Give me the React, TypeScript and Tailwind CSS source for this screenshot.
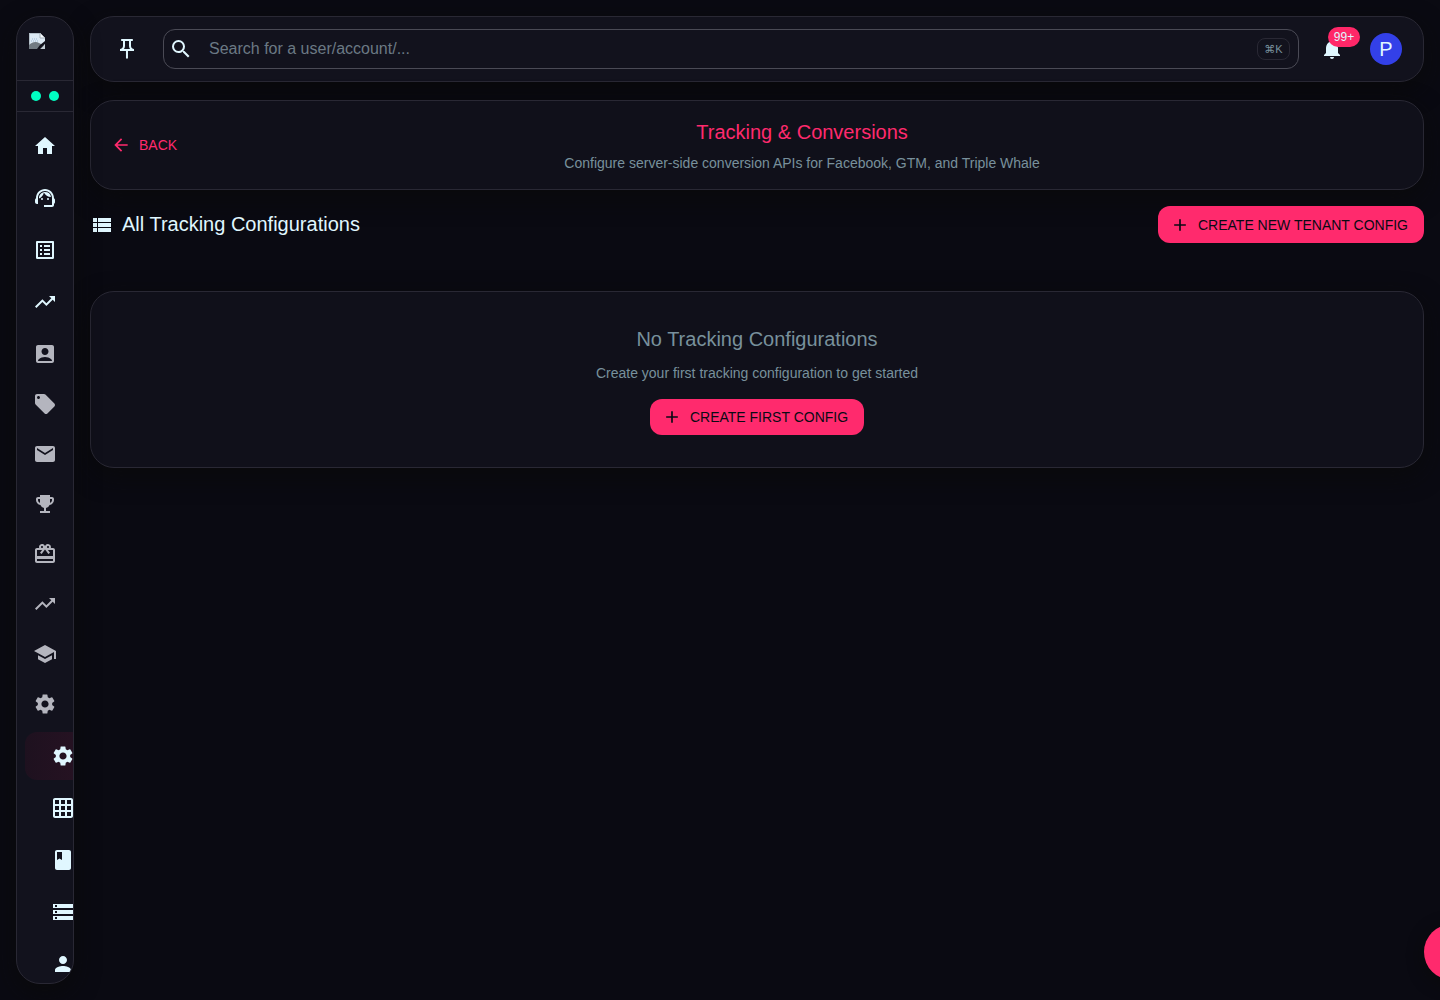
import React from "react";
import type { IconType } from "react-icons";
import {
  MdAccountBox,
  MdAdd,
  MdArrowBack,
  MdBook,
  MdCardGiftcard,
  MdEmail,
  MdEmojiEvents,
  MdGridOn,
  MdHome,
  MdListAlt,
  MdLocalOffer,
  MdNotifications,
  MdOutlinePushPin,
  MdPerson,
  MdSchool,
  MdSearch,
  MdSettings,
  MdStorage,
  MdSupportAgent,
  MdTrendingUp,
  MdViewList,
} from "react-icons/md";

interface NavEntry {
  label: string;
  icon: IconType;
  active?: boolean;
}

const MAIN_NAV: NavEntry[] = [
  { label: "Home", icon: MdHome },
  { label: "Support", icon: MdSupportAgent },
  { label: "Orders", icon: MdListAlt },
  { label: "Analytics", icon: MdTrendingUp },
];

const GROUP_NAV: NavEntry[] = [
  { label: "Accounts", icon: MdAccountBox },
  { label: "Offers", icon: MdLocalOffer },
  { label: "Email", icon: MdEmail },
  { label: "Competitions", icon: MdEmojiEvents },
  { label: "Rewards", icon: MdCardGiftcard },
  { label: "Growth", icon: MdTrendingUp },
  { label: "Education", icon: MdSchool },
  { label: "Settings", icon: MdSettings },
];

const SETTINGS_NAV: NavEntry[] = [
  { label: "General", icon: MdSettings, active: true },
  { label: "Grid", icon: MdGridOn },
  { label: "Docs", icon: MdBook },
  { label: "Storage", icon: MdStorage },
  { label: "Users", icon: MdPerson },
];

const PANEL =
  "rounded-3xl border border-[#292834] shadow-[0_8px_24px_rgba(10,10,10,0.8)]";

function BrokenImage() {
  return (
    <svg width="16" height="16" viewBox="0 0 16 16" role="img" aria-label="Logo">
      <path d="M0 0h11l5 5v11H0z" fill="#dce9f4" />
      <path d="M0 0h11v1H1v15H0z" fill="#b4c0ca" />
      <path d="M11 0l5 5h-5z" fill="#f6fafd" />
      <path d="M11 0v5h5" fill="none" stroke="#a3aeb8" strokeWidth="1" />
      <path
        d="M3 6h1M5 6h1M7 6h1M2 8h1M4 8h1M6 8h1M8 8h1"
        stroke="#9fb9d6"
        strokeWidth="1"
      />
      <path d="M0 16v-4c3-3 7-4 10-2l6 3v3z" fill="#727b83" />
      <path d="M16 8v3l-5 5H8l3-4z" fill="#11111b" />
      <path d="M16 11.500V16h-4.500z" fill="#c3cdd6" />
    </svg>
  );
}

function NavItem({
  entry,
  muted,
  nested,
}: {
  entry: NavEntry;
  muted?: boolean;
  nested?: boolean;
}) {
  const Icon = entry.icon;
  return (
    <a
      href="#"
      aria-label={entry.label}
      className={`ml-2 flex h-12 shrink-0 items-center rounded-xl ${nested ? "pl-[26px]" : "pl-2"} ${muted ? "text-[#b4b5be]" : "text-[#e0f7ff]"} ${entry.active ? "rounded-r-none bg-linear-to-r from-[#1e111f] to-[#251222]" : ""}`}
    >
      <Icon className="h-6 w-6 shrink-0" />
    </a>
  );
}

function Sidebar() {
  return (
    <aside
      className={`${PANEL} sticky top-4 flex h-[calc(100vh-32px)] w-[58px] shrink-0 flex-col overflow-hidden bg-[#12121d]`}
    >
      <div className="h-16 shrink-0 border-b border-[#292834] px-3 py-4">
        <BrokenImage />
      </div>
      <div className="flex h-[31px] shrink-0 items-center justify-center gap-2 border-b border-[#292834]">
        <span className="h-2.5 w-2.5 rounded-full bg-[#00ffc2]" />
        <span className="h-2.5 w-2.5 rounded-full bg-[#00ffc2]" />
      </div>
      <nav className="flex min-h-0 flex-col gap-1 overflow-hidden pt-2.5">
        {MAIN_NAV.map((entry) => (
          <NavItem key={entry.label} entry={entry} />
        ))}
        <div className="flex shrink-0 flex-col gap-0.5">
          {GROUP_NAV.map((entry) => (
            <NavItem key={entry.label} entry={entry} muted />
          ))}
        </div>
        {SETTINGS_NAV.map((entry) => (
          <NavItem key={entry.label} entry={entry} nested />
        ))}
      </nav>
    </aside>
  );
}

function TopBar() {
  return (
    <header
      className={`${PANEL} flex h-[66px] items-center bg-[#12121d] pr-[21px] pl-4`}
    >
      <button
        type="button"
        aria-label="Pin sidebar"
        className="flex h-10 w-10 items-center justify-center text-[#e0f7ff]"
      >
        <MdOutlinePushPin className="h-6 w-6" />
      </button>
      <label className="ml-4 flex h-10 flex-1 items-center rounded-xl border border-[#4a4a55] pr-2 pl-[5px]">
        <MdSearch className="h-6 w-6 shrink-0 text-[#e0f7ff]" />
        <input
          type="text"
          aria-label="Search"
          placeholder="Search for a user/account/..."
          className="ml-4 min-w-0 flex-1 bg-transparent text-base text-[#e0f7ff] outline-none placeholder:text-[#6b7984]"
        />
        <kbd className="flex h-[22px] w-[33px] items-center justify-center rounded-lg border border-[#292834] font-['Liberation_Sans','DejaVu_Sans',sans-serif] text-[11px] text-[#78909c]">
          ⌘K
        </kbd>
      </label>
      <button
        type="button"
        aria-label="Notifications"
        className="relative ml-[13px] flex h-10 w-10 items-center justify-center text-[#e0f7ff]"
      >
        <MdNotifications className="h-6 w-6" />
        <span className="absolute -top-0.5 left-4 flex h-5 w-8 items-center justify-center rounded-full bg-[#ff2768] text-xs text-[#e0f7ff]">
          99+
        </span>
      </button>
      <button
        type="button"
        aria-label="Profile"
        className="ml-[18px] flex h-8 w-8 items-center justify-center rounded-full bg-[#3340e8] text-xl text-[#e0f7ff]"
      >
        P
      </button>
    </header>
  );
}

function CreateButton({ children }: { children: React.ReactNode }) {
  return (
    <button
      type="button"
      className="flex min-h-9 items-center gap-2 rounded-xl bg-[#ff2a6d] pr-4 pl-3 text-sm text-[#0a0a14]"
    >
      <MdAdd className="h-5 w-5" />
      {children}
    </button>
  );
}

export default function App() {
  return (
    <div className="flex min-h-screen items-start gap-4 bg-[#0a0a12] p-4 font-['Liberation_Sans',Arial,sans-serif]">
      <Sidebar />

      <main className="min-w-0 flex-1">
        <TopBar />

        <section
          className={`${PANEL} mt-[18px] flex items-center gap-3 bg-[#10101a] p-4`}
        >
          <button
            type="button"
            className="flex h-9 items-center gap-2 pr-2 pl-1 text-sm text-[#ff2a6d]"
          >
            <MdArrowBack className="h-5 w-5" />
            BACK
          </button>
          <div className="flex-1 text-center">
            <h1 className="text-xl leading-[31px] text-[#ff2a6d]">
              Tracking &amp; Conversions
            </h1>
            <p className="mt-[5px] text-sm text-[#78909c]">
              Configure server-side conversion APIs for Facebook, GTM, and
              Triple Whale
            </p>
          </div>
        </section>

        <div className="mt-4 flex min-h-[37px] items-stretch justify-between">
          <h2 className="flex items-center gap-2 text-xl leading-[31px] text-[#e0f7ff]">
            <MdViewList className="h-6 w-6" />
            All Tracking Configurations
          </h2>
          <CreateButton>CREATE NEW TENANT CONFIG</CreateButton>
        </div>

        <section
          className={`${PANEL} mt-12 flex flex-col items-center bg-[#10101a] py-8 text-center`}
        >
          <h3 className="text-xl leading-[31px] text-[#78909c]">
            No Tracking Configurations
          </h3>
          <p className="mt-2 mb-4 text-sm text-[#78909c]">
            Create your first tracking configuration to get started
          </p>
          <CreateButton>CREATE FIRST CONFIG</CreateButton>
        </section>
      </main>

      {/* Floating action button, tucked past the right edge */}
      <button
        type="button"
        aria-label="Open chat"
        className="fixed -right-10 bottom-5 h-14 w-14 rounded-full bg-[#ff2a6d] shadow-[0_4px_16px_rgba(10,10,10,0.9)]"
      />
    </div>
  );
}
